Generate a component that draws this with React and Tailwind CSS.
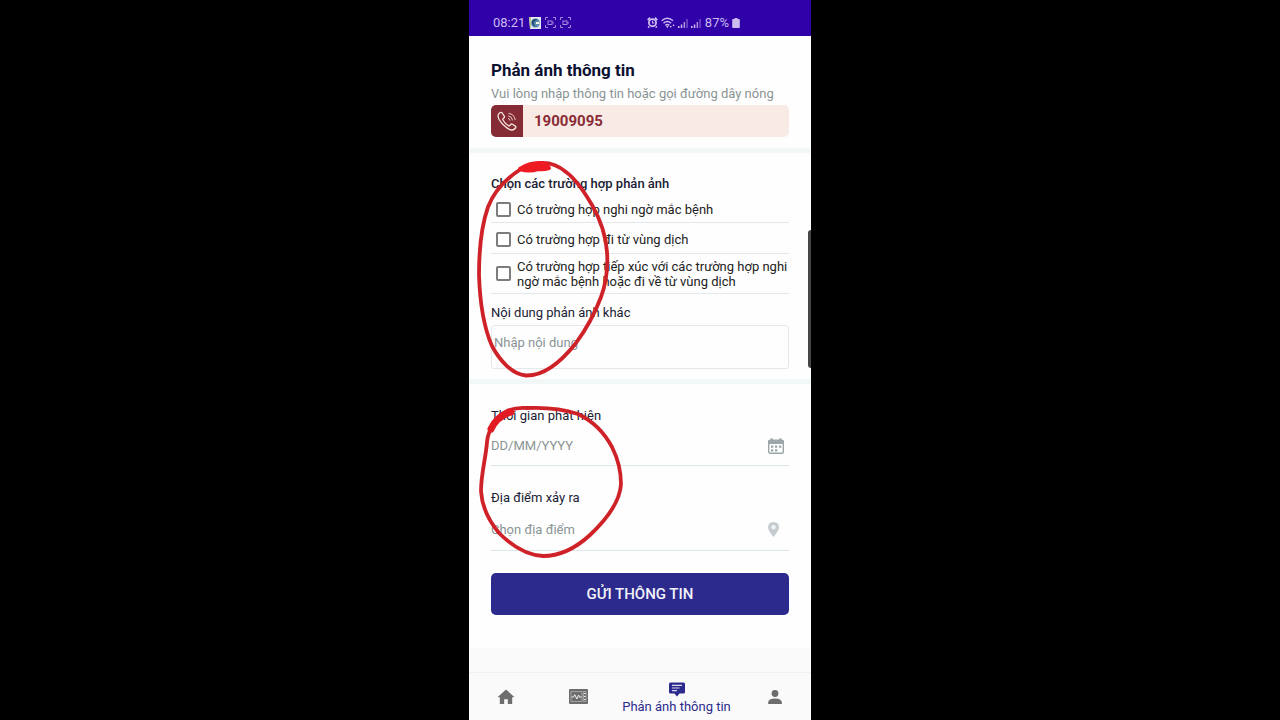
import React, { useState } from 'react';

const cases = [
  { id: 'suspected', label: 'Có trường hợp nghi ngờ mắc bệnh', row: 'h-7 pt-px' },
  { id: 'from-area', label: 'Có trường hợp đi từ vùng dịch', row: 'h-[31px] pt-[2px]' },
  {
    id: 'contact',
    label: 'Có trường hợp tiếp xúc với các trường hợp nghi ngờ mắc bệnh hoặc đi về từ vùng dịch',
    row: 'h-10',
  },
];

function CaptureIcon() {
  return (
    <svg width="11" height="11" viewBox="0 0 11 11" fill="none" stroke="currentColor" opacity="0.75">
      <path d="M.5 3V.5H3M8 .5h2.5V3M10.500 8v2.500H8M3 10.500H.5V8" />
      <rect x="3" y="4" width="4" height="3.500" />
      <path d="M7 5.500l1.500-1v3z" fill="currentColor" stroke="none" />
    </svg>
  );
}

function SignalIcon() {
  return (
    <svg width="10" height="10" viewBox="0 0 10 10" fill="currentColor">
      <path d="M0 8h1.500v2H0zM2.800 6.500h1.500V10H2.800z" />
      <path d="M5.600 4h1.500v6H5.600z" opacity="0.8" />
      <path d="M8.400 1h1.300v9H8.400z" opacity="0.5" />
    </svg>
  );
}

function StatusBar() {
  return (
    <div className="flex h-9 items-center justify-between bg-[#3000a8] pl-6 pr-[71px] pt-[9px] text-[13px] text-[#cdbcf0]">
      <div className="flex items-center gap-1">
        <span>08:21</span>
        <svg width="12" height="12" viewBox="0 0 12 12">
          <path d="M0 0h12v12H1z" fill="#e4e9ec" />
          <circle cx="6.500" cy="6" r="4.500" fill="#5c8fb0" />
          <path d="M3 3.500Q6 1 9 3Q6 3 5 6Q5 9 8 9.500Q4 10 3 7z" fill="#284f76" />
          <path d="M7 5h3.500v2H7z" fill="#f3f1e8" />
          <path d="M0 0h2v11H1z" fill="#b9c98b" />
        </svg>
        <CaptureIcon />
        <CaptureIcon />
      </div>
      <div className="flex items-center gap-[3px]">
        <svg width="11" height="11" viewBox="0 0 12 12" fill="none" stroke="currentColor">
          <circle cx="6" cy="6.200" r="3.900" strokeWidth="2" />
          <path d="M6 4v2.500h2" strokeWidth="1.200" />
          <path d="M.8 3.300L3.300.8M8.700.8l2.500 2.500M2.500 10.300L1.300 11.500M9.500 10.300l1.200 1.200" strokeWidth="2" />
        </svg>
        <svg width="14" height="12" viewBox="0 0 14 12" fill="none" stroke="currentColor" strokeWidth="1.500">
          <path d="M.7 3.800Q6.300-1.300 12 3.800M2.500 6.200q3.800-3.300 7.600 0M4.400 8.400q2-1.600 3.900 0" />
          <path d="M5 9h2.600L6.300 11.200zM8.700 9h2.200l-1.100 2zM11.500 9h2.200l-1.100-2z" fill="currentColor" stroke="none" />
        </svg>
        <SignalIcon />
        <SignalIcon />
        <span className="ml-px">87%</span>
        <svg width="8" height="10" viewBox="0 0 8 10" fill="currentColor">
          <path d="M2.500 0h3v1H7q.8 0 .8.800v7.400q0 .8-.8.800H1q-.8 0-.8-.8V1.800Q.2 1 1 1h1.500z" />
        </svg>
      </div>
    </div>
  );
}

function Header() {
  return (
    <header className="border-b-[5px] border-[#f1f8f7] px-[22px] pb-[11px] pt-[22px]">
      <h1 className="text-[17px] font-bold leading-6 text-[#0b1030]">Phản ánh thông tin</h1>
      <p className="whitespace-nowrap text-[13px] leading-[23px] text-[#8a9495]">
        Vui lòng nhập thông tin hoặc gọi đường dây nóng
      </p>
      <a
        href="tel:19009095"
        className="flex h-8 items-center overflow-hidden rounded-[5px] bg-[#f8ebe6] text-[15px] font-bold text-[#8a2c35]"
      >
        <span className="flex h-8 w-8 items-center justify-center bg-[#842b35]">
          <svg width="20" height="20" viewBox="0 0 20 20" fill="none" stroke="#f5e3df" strokeWidth="1.300" strokeLinejoin="round" strokeLinecap="round">
            <path d="M2.800 1.800Q1 3.200 1 5q.2 3.500 5.200 8.800Q11.500 19 15 19q2 0 3.500-2 .9-1-.2-1.900l-2.800-1.900q-1-.6-1.800.3l-1 1.200q-.5.500-1.200 0Q8 12.500 5.900 9q-.5-.8.1-1.300l1-.9q.8-.7.3-1.600L5.200 2Q4.200.7 2.800 1.800z" />
            <path d="M11.500 7.500q1.300.3 1.500 1.700M11.700 5q3.300.3 3.800 4M11.800 2.500q5.600.4 6.400 6.200" strokeWidth="0.900" />
          </svg>
        </span>
        <span className="ml-[11px]">19009095</span>
      </a>
    </header>
  );
}

function CaseList() {
  const [checked, setChecked] = useState([]);
  const toggle = id =>
    setChecked(checked.includes(id) ? checked.filter(c => c !== id) : [...checked, id]);

  return (
    <fieldset>
      <legend className="text-[13px] font-medium leading-[22px] text-[#1b2133]">Chọn các trường hợp phản ảnh</legend>
      {cases.map(c => (
        <label
          key={c.id}
          className={`flex items-center gap-[6px] border-b border-[#e3e9ea] pl-[5px] text-[13px] leading-[15px] text-[#222] ${c.row}`}
        >
          <input
            type="checkbox"
            checked={checked.includes(c.id)}
            onChange={() => toggle(c.id)}
            className="h-[15px] w-[15px] shrink-0 appearance-none rounded-[2px] border-2 border-[#7c7c7c] checked:bg-[#2c2a8c]"
          />
          <span>{c.label}</span>
        </label>
      ))}
    </fieldset>
  );
}

function PenMarks() {
  return (
    <svg
      className="pointer-events-none absolute left-0 top-0"
      width="342"
      height="720"
      viewBox="469 0 342 720"
      fill="none"
      stroke="#cf2228"
      strokeWidth="3.800"
      strokeLinecap="round"
      strokeLinejoin="round"
    >
      <path d="M521 169C507 178 495 189 488 207C481 227 479 252 479 275C480 305 484 328 492 346C500 361 512 374 526 375.500C544 376 561 362 576 343C587 328 595 313 601 297C607 281 608 266 607 252C606 236 600 219 592 205C585 193 577 180 566 172C558 165 549 162 539 163" />
      <path d="M520 169Q529 163 539 163Q546 163 549 168Q543 170 538 169Q529 172 520 169z" fill="#ee1b22" stroke="#ee1b22" strokeWidth="4" />
      <path d="M490 431C497 410 515 407 527 408C548 407 563 409 578 414C595 422 605 434 612 447C618 459 621 470 621 484C620 502 607 519 590 535C577 547 560 556 543 556C525 555 511 545 499 533C489 521 482 508 481 491C481 474 486 457 487 442Q488 432 493 426" />
      <path d="M491 429Q497 416 511 412" stroke="#e21b22" strokeWidth="7" />
    </svg>
  );
}

function BottomNav() {
  return (
    <nav className="flex h-12 items-center border-t border-[#f1f1f1] bg-[#fafafa] text-[#6d6d6d]">
      <a href="#home" aria-label="Trang chủ" className="flex flex-1 justify-center">
        <svg width="18" height="16" viewBox="0 0 18 16" fill="currentColor">
          <path d="M9 .5l8.500 7.700h-2.300V15h-4.400v-4.800H7.200V15H2.800V8.200H.5z" />
        </svg>
      </a>
      <a href="#stats" aria-label="Thống kê" className="flex flex-1 justify-center">
        <svg width="19" height="15" viewBox="0 0 19 15" fill="none">
          <rect width="19" height="15" rx="1" fill="#6d6d6d" />
          <path d="M2 2.500h11v10H2zM14.500 2.500h2.500v10h-2.500z" stroke="#b9b9b9" strokeWidth="0.700" />
          <path d="M2.500 8h1.800l1.500-2.300 2 4.300L9.600 6l1.200 2.500 1.900-1" stroke="#eee" />
          <path d="M15 4.500h1.500M15 7.500h1.500M15 10.500h1.500" stroke="#eee" strokeWidth="1.200" />
        </svg>
      </a>
      <a href="#report" className="flex w-[123px] flex-col items-center gap-px pt-1 text-[13px] leading-[18px] text-[#2c2a8c]">
        <svg width="16" height="15" viewBox="0 0 16 15" fill="none">
          <path d="M1.500.5h13q1.500 0 1.500 1.500v8.500q0 1-1.500 1h-4L8 14.500l-2.500-3h-4q-1.500 0-1.500-1V2Q0 .5 1.500.5z" fill="currentColor" />
          <path d="M3 3.400h10M3 6h7.500M3 8.600h5" stroke="#d8d8ee" strokeWidth="1.100" />
        </svg>
        <span className="whitespace-nowrap">Phản ánh thông tin</span>
      </a>
      <a href="#account" aria-label="Tài khoản" className="flex flex-1 justify-center">
        <svg width="14" height="14" viewBox="0 0 14 14" fill="currentColor">
          <circle cx="7" cy="3.500" r="3.400" />
          <path d="M.2 14v-1.700Q.5 8.700 7 8.500q6.500.2 6.800 3.800V14z" />
        </svg>
      </a>
    </nav>
  );
}

export default function App() {
  return (
    <div className="min-h-screen bg-black font-['Roboto','Noto_Sans',sans-serif]">
      <div className="relative mx-auto flex min-h-screen w-full max-w-[342px] flex-col bg-[#fafafa]">
        <StatusBar />
        <main className="bg-[#fefefe]">
          <Header />

          {/* Cases */}
          <section className="border-b-[5px] border-[#f1f8f7] px-[22px] pb-[10px] pt-5">
            <CaseList />
            <label htmlFor="other" className="mt-[7px] block text-[13px] leading-[23px] text-[#1b2133]">
              Nội dung phản ánh khác
            </label>
            <textarea
              id="other"
              placeholder="Nhập nội dung"
              className="mt-px block h-11 w-full resize-none rounded-[3px] border border-[#e3e9ea] bg-transparent px-[2px] py-2 text-[13px] leading-[18px] placeholder:text-[#8a9495]"
            />
          </section>

          {/* Time and place */}
          <section className="px-[22px] pb-[33px] pt-[21px]">
            <label htmlFor="date" className="block text-[13px] leading-[22px] text-[#1b2133]">Thời gian phát hiện</label>
            <div className="flex h-[39px] items-center border-b border-[#dde7ea] pr-[5px]">
              <input id="date" placeholder="DD/MM/YYYY" className="min-w-0 flex-1 text-[13px] outline-none placeholder:text-[#8a9495]" />
              <svg width="16" height="16" viewBox="0 0 16 16" fill="none">
                <rect x="0.700" y="2.200" width="14.600" height="13" rx="1.500" stroke="#9ba6aa" strokeWidth="1.400" />
                <path d="M.5 2h15v4H.5zM2.700.3h2V3h-2zM11.300.3h2V3h-2z" fill="#9ba6aa" />
                <path d="M3 7.500h2.300v2.300H3zM7 7.500h2.300v2.300H7zM11 7.500h2.300v2.300H11zM3 11.300h2.300v2.300H3zM7 11.300h2.300v2.300H7z" fill="#9ba6aa" />
              </svg>
            </div>
            <label htmlFor="place" className="mt-[21px] block text-[13px] leading-[22px] text-[#1b2133]">Địa điểm xảy ra</label>
            <div className="flex h-[42px] items-center border-b border-[#dde7ea] pr-[10px]">
              <input id="place" placeholder="Chọn địa điểm" className="min-w-0 flex-1 text-[13px] outline-none placeholder:text-[#8a9495]" />
              <svg width="11" height="15" viewBox="0 0 11 15">
                <path d="M5.500 0Q11 .3 11 5.500 10.500 9 5.500 15 .5 9 0 5.500 0 .3 5.500 0z" fill="#c5cccf" />
                <circle cx="5.500" cy="5.300" r="2.200" fill="#f1f4f4" />
              </svg>
            </div>
            <button type="submit" className="mt-[22px] h-[42px] w-full rounded-[5px] bg-[#2c2a8c] text-[15px] font-medium text-[#f2f2fa]">
              GỬI THÔNG TIN
            </button>
          </section>
        </main>

        <div className="mt-auto">
          <BottomNav />
        </div>

        <div className="absolute right-0 top-[230px] h-[138px] w-[3px] rounded-l-[3px] bg-[#464646]" />
        <PenMarks />
      </div>
    </div>
  );
}
